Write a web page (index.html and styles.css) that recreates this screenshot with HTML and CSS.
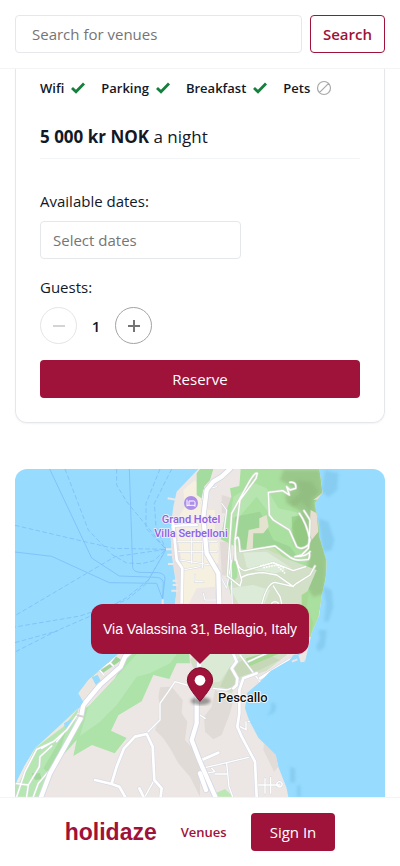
FILE: index.html
```
<!DOCTYPE html>
<html lang="en">
<head>
<meta charset="utf-8">
<meta name="viewport" content="width=device-width, initial-scale=1">
<title>Holidaze</title>
<link rel="stylesheet" href="styles.css">
</head>
<body>
<header class="topbar">
  <form class="search">
    <input class="field search-field" type="search" placeholder="Search for venues" aria-label="Search for venues">
    <button class="search-button" type="submit">Search</button>
  </form>
</header>

<main class="content">
  <section class="card">
    <ul class="amenities">
      <li>Wifi <svg class="icon" viewBox="0 0 16 16"><path d="M2 8l4 3.8L14 3.5" fill="none" stroke="#15803d" stroke-width="2.8"/></svg></li>
      <li>Parking <svg class="icon" viewBox="0 0 16 16"><path d="M2 8l4 3.8L14 3.5" fill="none" stroke="#15803d" stroke-width="2.8"/></svg></li>
      <li>Breakfast <svg class="icon" viewBox="0 0 16 16"><path d="M2 8l4 3.8L14 3.5" fill="none" stroke="#15803d" stroke-width="2.8"/></svg></li>
      <li>Pets <svg class="icon" viewBox="0 0 16 16"><path d="M3.4 12.6l9.2-9.2M14.5 8a6.5 6.5 0 1 1-13 0a6.5 6.5 0 0 1 13 0z" fill="none" stroke="#a8a8a8" stroke-width="1.2"/></svg></li>
    </ul>
    <p class="price"><strong>5 000 kr NOK</strong> a night</p>
    <form class="booking">
      <div class="group">
        <label for="dates">Available dates:</label>
        <input class="field date-field" id="dates" type="text" placeholder="Select dates">
      </div>
      <div class="group">
        <span id="guests">Guests:</span>
        <div class="stepper" role="group" aria-labelledby="guests">
          <button class="step" type="button" aria-label="Fewer guests" disabled><svg viewBox="0 0 14 14"><path d="M1 7h12" stroke="currentColor" stroke-width="2"/></svg></button>
          <output class="count">1</output>
          <button class="step" type="button" aria-label="More guests"><svg viewBox="0 0 14 14"><path d="M1 7h12M7 1v12" stroke="currentColor" stroke-width="2"/></svg></button>
        </div>
      </div>
      <button class="primary" type="submit">Reserve</button>
    </form>
  </section>

  <section class="map" aria-label="Map">
    <svg class="map-art" viewBox="45 27 1110 1200" preserveAspectRatio="xMidYMin slice">
      <defs>
        <clipPath id="land-clip"><path id="land" d="M595 27L530 95L520 140L514 185L512 230L516 290L524 345L530 390L525 432L470 500L355 582L265 660L235 700L250 725L240 742L165 810L105 865L75 915L45 975V1230H875L865 1010L860 985L835 920L827 885L775 833L747 780L735 745L742 698L780 665L812 632L868 600L880 585L905 580L915 605L935 520L958 465L965 405L978 350L980 305L958 230L955 185L944 130L968 98L958 27z"/></clipPath>
        <filter id="soft"><feGaussianBlur stdDeviation="5"/></filter>
      </defs>
      <path fill="#97dcff" d="M45 27h1110v1200H45z"/>

      <!-- shallow water -->
      <g fill="#82c8ec" opacity=".75" filter="url(#soft)">
        <path d="M975 30L1015 40L1012 90L985 112L965 95z"/>
        <path d="M955 175L985 185L1003 240L995 270L970 275z"/>
        <path d="M968 378L995 390L1000 440L985 485L972 485L978 430z"/>
        <path d="M955 510H980L975 560L955 575L948 560L960 535z"/>
        <path d="M815 725L829 735L825 755L800 770L812 750z"/>
        <path d="M870 920L885 925L886 965L870 970z"/>
        <path d="M892 975L902 978V1010H890z"/>
      </g>

      <!-- ferry routes -->
      <g fill="none" stroke="#7dbdf9" stroke-width="2.5">
        <path d="M149 27L275 294L358 348L470 352Q490 355 490 370L488 415"/>
        <path d="M388 27L398 322Q400 336 420 337L475 338Q495 341 495 355L488 415"/>
        <path d="M45 276L155 289L328 368L470 370L488 418"/>
        <g stroke-dasharray="14 7">
          <path d="M195 27L265 210L335 283L380 309L425 311L462 302L498 268"/>
          <path d="M45 196L340 265L498 268L345 290L45 467"/>
          <path d="M350 27L350 75L380 125L498 268"/>
          <path d="M480 27L438 130L438 205L498 268"/>
          <path d="M515 27L463 130L468 200L498 268L440 370L380 420L240 468L45 501"/>
          <path d="M498 268L445 360L380 413L290 460L175 510L45 576"/>
          <path d="M45 548L175 512"/>
        </g>
      </g>

      <path fill="#bde8c0" d="M235 742L165 810L105 865L135 852L205 790z"/>
      <use href="#land" fill="#ece7e4"/>
      <g clip-path="url(#land-clip)">
        <!-- town blocks -->
        <path fill="#f6f0e1" d="M585 60L618 115L625 170L630 240L650 310L645 380L590 385L565 435H540L548 330L518 200L555 140L550 90z"/>
        <path fill="#e8e0df" d="M512 180L528 205L545 310V435H525V340L510 240z"/>
        <path fill="#f6f0e1" d="M610 150h35v65h-25zM600 240h55v70h-45z"/>
        <path fill="#e2dad6" d="M665 105L700 115L695 160H665zM660 245L695 245L690 350L665 345z"/>

        <!-- northern park -->
        <path fill="#a4dca0" d="M590 40L600 27H640L630 60L612 80L620 125L590 105z"/>
        <path fill="#a9df9f" d="M722 27L960 27L985 300L970 390L945 530H890L850 455L700 430L682 365L708 260L662 238L675 165L694 110L690 85L718 78z"/>
        <path fill="#b6e5af" d="M700 110L765 70L800 85L835 145L900 160L870 210L830 190L770 110L710 180L692 165z"/>
        <path fill="#9ed596" d="M705 170L780 155L820 240L870 260L900 300L820 262L730 275L710 235z"/>
        <path fill="#c4dfb0" d="M700 250L745 280L820 262L850 290L900 345L858 350L750 295L710 300z"/>
        <g fill="#98c487" filter="url(#soft)" opacity=".85">
          <path d="M850 30H960L970 95L944 125L955 200L980 290L975 400L940 410L910 370L930 280L885 255L878 190L905 155L860 130L855 105L885 85L840 60z"/>
        </g>
        <path fill="#87b277" d="M890 60L935 65L955 95L935 115L930 150L905 125L880 140L870 125L900 100z" opacity=".4" filter="url(#soft)"/>
        <path fill="#90cb7f" d="M875 170L910 165L928 235L905 265L880 250z" opacity=".7"/>
        <path fill="#e8ddd2" d="M932 150L950 160L955 215L935 240L928 210zM940 120L968 98L962 118z"/>
        <path fill="#e4e3d0" d="M778 175L800 165L806 200L790 220L760 220L758 275H738L746 210L778 203z"/>
        <path fill="#d2e0c8" d="M712 275L800 268L870 300L950 330L920 400L900 455L860 585L800 632L720 660L695 700L600 672L570 600L700 430L688 380L712 350z"/>
        <path fill="#dcebd7" d="M730 278L800 275L875 325L810 345L740 322zM690 385L760 375L810 390L790 440L720 440z"/>
        <path fill="#dbead4" d="M600 582H730L690 620L660 665L600 672z"/>
        <path fill="#c7d8b9" d="M690 620L730 600L800 582L840 600L780 630L720 650L700 690L660 680z"/>
        <path fill="#a7d994" d="M905 405L928 390L920 440L940 490L930 530H905zM738 595L785 582H835L745 620z"/>

        <!-- southern woods -->
        <path fill="#ade3a9" d="M385 582H568L570 610H530L508 657L460 645L425 724L355 766L333 812L380 834L344 880L276 855L220 888L230 840L185 890L245 752L270 735L345 655z"/>
        <path fill="#bae8b8" d="M410 582H530L510 610L450 640L410 650L350 735L300 785L240 828L265 740L350 650z"/>
        <path fill="#b6e7b3" d="M45 975L105 865L190 800L235 745L230 775L195 865L120 1010H45z"/>
        <path fill="#a1d69a" d="M95 940l25 0l5 18l-20 2zM262 655L345 588L365 600L300 645z"/>
        <path fill="#a8dea3" d="M200 805L175 890L145 940L130 925z"/>
        <path fill="#ece6e1" d="M235 700L265 660L300 630L320 655L255 720z"/>
        <path fill="#97dcff" d="M275 652L293 644L303 664L288 676zM192 790L215 777L210 800L195 804z"/>
        <path fill="#efebe8" d="M45 955L75 915L105 865L85 910L55 975z"/>
        <path fill="#e0dbd6" d="M480 682L515 680L548 720L545 760L562 785L555 840L600 890V1010L570 950L535 910L510 865L490 835L465 810L482 760L475 710z"/>
        <path fill="#e1dbd7" d="M645 690L675 700L698 730L690 760L665 825L640 838L615 815L612 770L635 740z"/>
        <path fill="#e2dcd8" d="M793 840L830 880L835 920L822 935L805 900L790 870z"/>
        <path fill="#bce8b5" d="M650 998L675 987L700 1010H655z"/>

        <!-- minor streets -->
        <g fill="none" stroke-linejoin="round" stroke-linecap="round">
          <path stroke="#d6dae2" stroke-width="6" d="M530 245H650M535 275H650M540 300L650 318M548 330L600 320M575 230V310M608 235V325M625 240V300M585 345V365H610M605 130L612 90L650 80M665 130L680 150L670 230M660 345L680 385L695 300M610 400L615 420H650V395M690 240L697 440"/>
          <path stroke="#fff" stroke-width="3" d="M530 245H650M535 275H650M540 300L650 318M548 330L600 320M575 230V310M608 235V325M625 240V300M585 345V365H610M605 130L612 90L650 80M665 130L680 150L670 230M660 345L680 385L695 300M610 400L615 420H650V395M690 240L697 440"/>
          <path stroke="#d8dce0" stroke-width="7" d="M110 868L160 845L200 810L235 760M110 868L75 935L50 1010M125 865L150 850M155 858L120 890L118 920L85 975L80 1010M145 935L115 970L100 1010M45 970L85 975M190 820L170 845M265 650L330 608L350 582M300 632L312 645M330 608L340 618"/>
          <path stroke="#fff" stroke-width="4" d="M110 868L160 845L200 810L235 760M110 868L75 935L50 1010M125 865L150 850M155 858L120 890L118 920L85 975L80 1010M145 935L115 970L100 1010M45 970L85 975M190 820L170 845M265 650L330 608L350 582M300 632L312 645M330 608L340 618"/>
          <path stroke="#d6dae2" stroke-width="7" d="M440 820L480 780V730L505 695L525 665L560 675L600 690M460 965L435 1010M605 925L680 908L745 892M680 910L687 980L698 1010M615 940L645 935L635 925M645 942H680M775 975H840M795 955V1000M812 952V1000M838 965a8 8 0 1 0 1 0M720 585L780 665M745 605L800 580M720 800L740 810M738 785V808M745 785L762 780M600 765L615 775M640 685L680 690L720 675"/>
          <path stroke="#fff" stroke-width="4" d="M440 820L480 780V730L505 695L525 665L560 675L600 690M460 965L435 1010M605 925L680 908L745 892M680 910L687 980L698 1010M615 940L645 935L635 925M645 942H680M775 975H840M795 955V1000M812 952V1000M838 965a8 8 0 1 0 1 0M720 585L780 665M745 605L800 580M720 800L740 810M738 785V808M745 785L762 780M600 765L615 775M640 685L680 690L720 675"/>
        </g>

        <!-- roads -->
        <g fill="none" stroke-linejoin="round" stroke-linecap="round">
          <path stroke="#cfdac9" stroke-width="8" d="M682 350L695 160L745 70Q765 35 772 40L768 55L720 120L705 240M705 300L705 240Q715 220 718 250L720 275L825 258L870 292Q890 305 925 298Q930 290 928 280M870 67Q890 65 887 85L870 90L860 80L868 105L848 92L805 97L808 165L820 180L868 210L890 260Q905 272 925 255L930 240Q920 190 898 160M912 152L930 180Q930 230 925 265L905 285L885 290Q920 290 930 275M705 250L708 300L725 360L720 378L685 350M710 300Q715 330 735 332L820 308L850 320L880 332L917 320M725 352Q745 340 790 338L830 345L880 380L825 367Q800 370 785 435M880 378L890 370L930 345L945 318M820 378L840 410L845 430M815 430Q825 420 835 430"/>
          <path stroke="#fff" stroke-width="4" d="M682 350L695 160L745 70Q765 35 772 40L768 55L720 120L705 240M705 300L705 240Q715 220 718 250L720 275L825 258L870 292Q890 305 925 298Q930 290 928 280M870 67Q890 65 887 85L870 90L860 80L868 105L848 92L805 97L808 165L820 180L868 210L890 260Q905 272 925 255L930 240Q920 190 898 160M912 152L930 180Q930 230 925 265L905 285L885 290Q920 290 930 275M705 250L708 300L725 360L720 378L685 350M710 300Q715 330 735 332L820 308L850 320L880 332L917 320M725 352Q745 340 790 338L830 345L880 380L825 367Q800 370 785 435M880 378L890 370L930 345L945 318M820 378L840 410L845 430M815 430Q825 420 835 430"/>
          <path stroke="#fff" stroke-width="5" stroke-linecap="butt" stroke-dasharray="5 3" d="M780 318L820 308L855 325M790 323L830 315L855 340"/>
          <path stroke="#d9dce6" stroke-width="12" d="M518 180L530 300L547 325L545 440M518 200Q518 195 590 195M285 960L335 972L358 980L375 1010M335 970L350 920L372 865L405 830L440 822L458 860L463 960L485 985L482 1010M418 985L430 1010M605 900L655 878M700 582L710 605L695 625L712 655L710 675L700 685M718 690L718 760L712 800L725 830L765 905L770 1010M718 690L730 655L770 640M780 655L870 600L900 582"/>
          <path stroke="#fff" stroke-width="8" d="M518 180L530 300L547 325L545 440M518 200Q518 195 590 195M285 960L335 972L358 980L375 1010M335 970L350 920L372 865L405 830L440 822L458 860L463 960L485 985L482 1010M418 985L430 1010M605 900L655 878M700 582L710 605L695 625L712 655L710 675L700 685M718 690L718 760L712 800L725 830L765 905L770 1010M718 690L730 655L770 640M780 655L870 600L900 582"/>
          <path stroke="#d4d8e4" stroke-width="18" d="M545 440L375 590L362 620L300 675L250 735L242 775L195 860L150 940L120 1020M690 27L665 50L640 65L620 90L610 170L620 280L655 340L658 440L600 580L590 720L590 790L575 840L600 905L650 1020M600 940L618 990"/>
          <path stroke="#fff" stroke-width="13" d="M545 440L375 590L362 620L300 675L250 735L242 775L195 860L150 940L120 1020M690 27L665 50L640 65L620 90L610 170L620 280L655 340L658 440L600 580L590 720L590 790L575 840L600 905L650 1020M600 940L618 990"/>
          <path stroke="#d8d2d6" stroke-width="6" d="M232 766L250 770"/>
        </g>
      </g>
      <!-- piers -->
      <path fill="none" stroke="#ece7e4" stroke-width="6" d="M503 115L528 119M498 268H516M502 284H516M504 312H520M518 362H532M518 375H534M514 392H534M488 418V432M876 605L892 598"/>
      <path fill="#ece7e4" d="M895 585L908 580L914 605L902 607z"/>

      <!-- hotel marker -->
      <circle cx="573" cy="129" r="21" fill="#ad8fe9"/>
      <path fill="none" stroke="#fff" stroke-width="3" d="M561 119v20M561 136h24v-9q0-4-4-4h-14v13M585 136v4"/>
      <g class="place hotel">
        <text x="573" y="188">Grand Hotel</text>
        <text x="573" y="230">Villa Serbelloni</text>
      </g>
      <text class="place town" x="654" y="726">Pescallo</text>

      <!-- pin -->
      <ellipse cx="602" cy="723" rx="30" ry="12" fill="#444" opacity=".5" filter="url(#soft)"/>
      <path fill="#9f1239" stroke="#7c0c2b" stroke-width="3" d="M600 724Q562 681 562 661a38 38 0 0 1 76 0Q638 681 600 724z"/>
      <circle cx="600" cy="661" r="16" fill="#fff"/>
    </svg>
    <div class="popup">Via Valassina 31, Bellagio, Italy</div>
  </section>
</main>

<nav class="bottombar">
  <a class="brand" href="#">holidaze</a>
  <a class="link" href="#">Venues</a>
  <button class="primary sign-in" type="button">Sign In</button>
</nav>
</body>
</html>
```
FILE: styles.css
```
* { box-sizing: border-box; }

body {
  margin: 0;
  height: 100vh;
  display: flex;
  flex-direction: column;
  background: #fff;
  color: #111827;
  font: 15px/24px "Open Sans", sans-serif;
}

button, input { font: inherit; }
button { cursor: pointer; }

.topbar {
  padding: 15px;
  border-bottom: 1px solid #f3f4f6;
}

.search { display: flex; gap: 8px; }

.field {
  height: 38px;
  padding: 0 12px;
  border: 1px solid #e5e7eb;
  border-radius: 4px;
  background: #fff;
  color: inherit;
  appearance: none;
}
.field::placeholder { color: #757575; opacity: 1; }

.search-field { flex: 1; min-width: 0; padding: 0 16px; }

.search-button {
  padding: 0 12px;
  border: 1px solid #9f1239;
  border-radius: 4px;
  background: #fff;
  color: #9f1239;
  font-weight: 600;
}

.content {
  flex: 1;
  min-height: 0;
  overflow: hidden;
  padding: 0 15px;
}

.card {
  padding: 8px 24px 24px;
  border: 1px solid #e5e7eb;
  border-top: 0;
  border-radius: 0 0 12px 12px;
  box-shadow: 0 1px 2px rgb(0 0 0 / 5%);
}

.amenities {
  display: flex;
  gap: 15px;
  margin: 0 0 24px;
  padding: 0;
  list-style: none;
  font-size: 13px;
  line-height: 22px;
  font-weight: 600;
}
.amenities li { display: flex; align-items: center; gap: 6px; }
.icon { width: 16px; height: 16px; }

.price {
  margin: 0 0 30px;
  padding-bottom: 7px;
  border-bottom: 1px solid #f3f4f6;
  font-size: 17px;
  line-height: 28px;
}

.booking { display: flex; flex-direction: column; gap: 16px; }
.group { display: flex; flex-direction: column; gap: 8px; }
.date-field { width: 201px; }

.stepper { display: flex; align-items: center; }
.step {
  display: grid;
  place-items: center;
  width: 37px;
  height: 37px;
  padding: 0;
  border: 1px solid #a3a3a3;
  border-radius: 50%;
  background: #fff;
  color: #757575;
}
.step:disabled { border-color: #e5e5e5; color: #d4d4d4; }
.step svg { width: 14px; height: 14px; }
.count { width: 38px; text-align: center; font-weight: 600; }

.primary {
  height: 38px;
  padding: 0 19px;
  border: 0;
  border-radius: 4px;
  background: #9f1239;
  color: #fff;
}

.map {
  position: relative;
  height: 400px;
  margin-top: 46px;
  border-radius: 12px;
  overflow: hidden;
}
.map-art { display: block; width: 100%; height: 100%; }

.place {
  font-family: Roboto, sans-serif;
  font-weight: 500;
  paint-order: stroke;
  stroke: #fff;
  stroke-width: 5px;
  stroke-linejoin: round;
}
.hotel { font-size: 33px; fill: #8b63df; text-anchor: middle; stroke: #f5effa; }
.town { font-size: 39px; fill: #111; }

.popup {
  position: absolute;
  top: 135px;
  left: 50%;
  transform: translateX(-50%);
  padding: 15px 12px;
  border-radius: 12px;
  background: #9f1239;
  color: #fff;
  font: 14px/20px "Liberation Sans", sans-serif;
  white-space: nowrap;
}
.popup::after {
  content: "";
  position: absolute;
  top: 100%;
  left: 50%;
  margin-left: -10px;
  border: 10px solid transparent;
  border-bottom: 0;
  border-top-color: #9f1239;
}

.bottombar {
  display: flex;
  align-items: center;
  justify-content: center;
  padding: 15px;
  border-top: 1px solid #f3f4f6;
}
.bottombar a { color: #9f1239; text-decoration: none; }
.bottombar .brand { font: bold 23px/24px "Liberation Sans", sans-serif; }
.bottombar .link { margin: 0 24px; font-size: 13px; font-weight: 600; }
```
